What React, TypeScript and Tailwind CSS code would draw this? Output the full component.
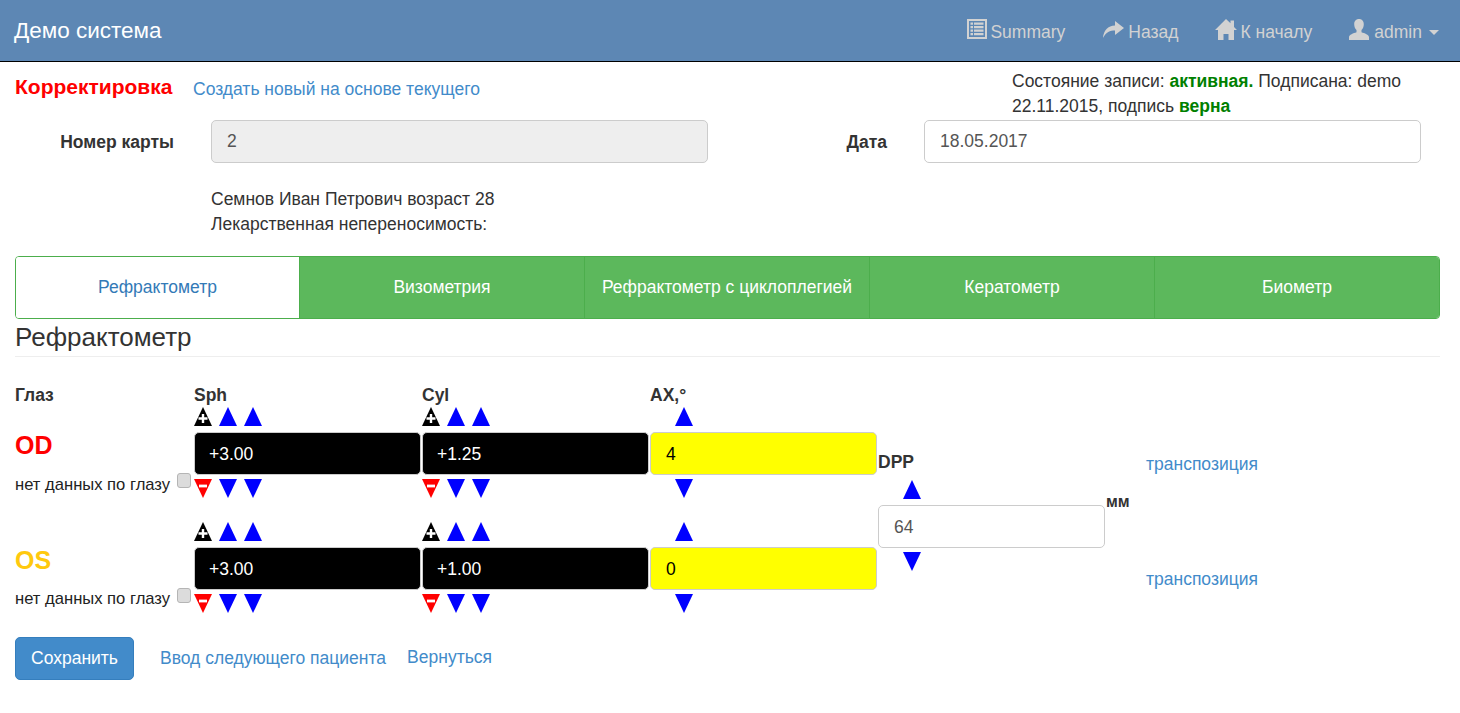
const link = "text-[#428bca]";

function Up({ kind = "blue" }: { kind?: "blue" | "plus" }) {
  return (
    <svg width="18" height="19" viewBox="0 0 18 19" className="block shrink-0">
      <polygon points="9,0 18,19 0,19" fill={kind === "plus" ? "#000" : "#0000ff"} />
      {kind === "plus" && <path d="M9 7v9M4.500 11.500h9" stroke="#fff" strokeWidth="2.400" />}
    </svg>
  );
}

function Down({ kind = "blue" }: { kind?: "blue" | "minus" }) {
  return (
    <svg width="18" height="19" viewBox="0 0 18 19" className="block shrink-0">
      <polygon points="0,0 18,0 9,19" fill={kind === "minus" ? "#ff0000" : "#0000ff"} />
      {kind === "minus" && <path d="M5 7h8" stroke="#fff" strokeWidth="2.800" />}
    </svg>
  );
}

function ListIcon() {
  return (
    <svg width="20" height="20" viewBox="0 0 20 20" fill="#d2d2d2" className="-mt-[3px] shrink-0">
      <path fillRule="evenodd" d="M0 0h20v20H0zM2 2v16h16V2z" />
      <path d="M3.500 3.500h2.500v2.300h-2.500zM7 3.500h9.500v2.300H7zM3.500 7h2.500v2.300h-2.500zM7 7h9.500v2.300H7zM3.500 10.500h2.500v2.300h-2.500zM7 10.500h9.500v2.300H7zM3.500 14h2.500v2.300h-2.500zM7 14h9.500v2.300H7z" />
    </svg>
  );
}

function ShareIcon() {
  return (
    <svg width="21" height="17" viewBox="0 0 21 17" fill="#d2d2d2" className="-mt-[3px] shrink-0">
      <path d="M12 0l9 7-9 7V9.500C7 9.500 3 11 0 17 0.500 9.500 5 4.500 12 4.500z" />
    </svg>
  );
}

function HomeIcon() {
  return (
    <svg width="22" height="21" viewBox="0 0 22 21" fill="#d2d2d2" className="-mt-[3px] shrink-0">
      <path d="M11 0l4.500 4.300V1.500h3.500v6.400L22 11h-3v10h-5.500v-6h-5v6H3V11H0z" />
    </svg>
  );
}

function UserIcon() {
  return (
    <svg width="20" height="21" viewBox="0 0 20 21" fill="#d2d2d2" className="-mt-[3px] shrink-0">
      <path d="M10 0c3 0 4.800 2.200 4.800 5.200 0 2.500-1 4.600-2.300 5.800v2.200c3 1 7.500 2.500 7.500 5V21H0v-2.800c0-2.500 4.500-4 7.500-5V11C6.200 9.800 5.200 7.700 5.200 5.200 5.200 2.200 7 0 10 0z" />
    </svg>
  );
}

function Field({ value, className = "" }: { value: string; className?: string }) {
  return (
    <input
      readOnly
      value={value}
      className={"block h-[43px] w-full rounded-[5px] border border-[#ccc] pr-[15px] text-[17.5px] outline-none " + className}
    />
  );
}

function ValueCol({ value, single }: { value: string; single?: boolean }) {
  return (
    <div className="w-[228px] pr-[1px]">
      {single ? (
        <div className="flex h-[19px] pl-[25px]">
          <Up />
        </div>
      ) : (
        <div className="flex h-[19px] gap-[7px]">
          <Up kind="plus" />
          <Up />
          <Up />
        </div>
      )}
      <Field
        value={value}
        className={"mt-[6px] pt-[2px] " + (single ? "bg-[#ffff00] pl-[15px] text-black" : "bg-black pl-[14px] text-white")}
      />
      {single ? (
        <div className="mt-[4px] flex h-[19px] pl-[25px]">
          <Down />
        </div>
      ) : (
        <div className="mt-[4px] flex h-[19px] gap-[7px]">
          <Down kind="minus" />
          <Down />
          <Down />
        </div>
      )}
    </div>
  );
}

function EyeRow(props: { eye: string; color: string; sph: string; cyl: string; ax: string; noteClass: string }) {
  return (
    <div className="flex h-[115px]">
      <div className="relative w-[179px]">
        <div className={"mt-[20px] text-[25px] font-bold leading-[36px] " + props.color}>{props.eye}</div>
        <div className={"text-[16.6px] leading-[22px] text-[#222] " + props.noteClass}>нет данных по глазу</div>
        <input
          type="checkbox"
          disabled
          className="absolute left-[162px] top-[66px] h-[15px] w-[14px] appearance-none rounded-[3px] border border-[#b5b5b5] bg-[#dcdcdc]"
        />
      </div>
      <ValueCol value={props.sph} />
      <ValueCol value={props.cyl} />
      <ValueCol value={props.ax} single />
    </div>
  );
}

const tabs = [
  { name: "Рефрактометр", width: "w-[284px]" },
  { name: "Визометрия", width: "w-[285px]" },
  { name: "Рефрактометр с циклоплегией", width: "w-[285px]" },
  { name: "Кератометр", width: "w-[285px]" },
  { name: "Биометр", width: "flex-1" },
];

export default function App() {
  return (
    <div className="min-h-[713px] bg-white font-['Liberation_Sans',Arial,sans-serif] text-[17.5px] leading-[25px] text-[#333]">
      <nav className="flex h-[62px] items-center justify-between border-b border-black bg-[#5d87b4] pl-[14px] pr-[21px]">
        <div className="text-[22.5px] text-white">Демо система</div>
        <div className="flex items-center text-[#d2d2d2]">
          <span className="flex items-center gap-[3px]"><ListIcon /><span className="pt-[4px]">Summary</span></span>
          <span className="ml-[38px] flex items-center gap-[4px]"><ShareIcon /><span className="pt-[4px]">Назад</span></span>
          <span className="ml-[37px] flex items-center gap-[3px]"><HomeIcon /><span className="pt-[4px]">К началу</span></span>
          <span className="ml-[37px] flex items-center gap-[5px]">
            <UserIcon /><span className="pt-[4px]">admin</span>
            <span className="ml-[2px] mt-[4px] h-0 w-0 border-x-[5px] border-t-[5px] border-x-transparent border-t-[#d2d2d2]" />
          </span>
        </div>
      </nav>

      <main className="px-[15px] pr-[20px]">
        <div className="flex h-[58px]">
          <div className="mt-[12px] w-[178px] text-[21px] font-bold text-[#ff0000]">Корректировка</div>
          <a className={"mt-[15px] w-[819px] " + link}>Создать новый на основе текущего</a>
          <div className="mt-[7px]">
            Состояние записи: <b className="text-[#008000]">активная.</b> Подписана: demo
            <br />
            22.11.2015, подпись <b className="text-[#008000]">верна</b>
          </div>
        </div>

        <div className="flex items-center">
          <label className="mt-[2px] w-[159px] text-right font-bold">Номер карты</label>
          <div className="ml-[37px] w-[497px]">
            <Field value="2" className="bg-[#eee] pl-[15px] text-[#555]" />
          </div>
          <label className="mt-[2px] w-[179px] text-right font-bold">Дата</label>
          <div className="ml-[37px] w-[497px]">
            <Field value="18.05.2017" className="bg-white pl-[15px] text-[#555]" />
          </div>
        </div>

        <div className="ml-[196px] mt-[24px]">
          Семнов Иван Петрович возраст 28
          <br />
          Лекарственная непереносимость:
        </div>

        <div className="mt-[19px] flex h-[63px] overflow-hidden rounded-[4px] border border-[#4cae4c]">
          {tabs.map((tab, i) => (
            <div
              key={tab.name}
              className={
                "flex items-center justify-center border-r border-[#4cae4c] last:border-r-0 " +
                tab.width +
                (i === 0 ? " bg-white text-[#337ab7]" : " bg-[#5cb85c] text-white")
              }
            >
              {tab.name}
            </div>
          ))}
        </div>

        <h4 className="mt-[2px] border-b border-[#eee] pb-[2px] text-[26px] leading-[33px]">Рефрактометр</h4>

        <div className="mt-[26px] flex h-[24px] font-bold">
          <div className="w-[179px]">Глаз</div>
          <div className="w-[228px]">Sph</div>
          <div className="w-[228px]">Cyl</div>
          <div>AX,°</div>
        </div>

        <div className="flex">
          <div className="w-[863px]">
            <EyeRow eye="OD" color="text-[#ff0000]" sph="+3.00" cyl="+1.25" ax="4" noteClass="mt-[11px]" />
            <EyeRow eye="OS" color="text-[#ffc90e]" sph="+3.00" cyl="+1.00" ax="0" noteClass="mt-[10px]" />
          </div>
          <div className="w-[227px] pt-[43px]">
            <div className="font-bold">DPP</div>
            <div className="mt-[5px] pl-[25px]"><Up /></div>
            <div className="relative mt-[6px]">
              <Field value="64" className="bg-white pl-[15px] pt-[2px] text-[#555]" />
              <span className="absolute left-[228px] top-[-13px] text-[16px] font-bold leading-[20px]">мм</span>
            </div>
            <div className="mt-[4px] pl-[25px]"><Down /></div>
          </div>
          <div className="ml-[41px] pt-[45px]">
            <a className={"block " + link}>транспозиция</a>
            <a className={"mt-[90px] block " + link}>транспозиция</a>
          </div>
        </div>

        <div className="flex items-center">
          <button className="h-[43px] w-[119px] rounded-[5px] border border-[#357ebd] bg-[#428bca] text-white">
            Сохранить
          </button>
          <a className={"ml-[26px] " + link}>Ввод следующего пациента</a>
          <a className={"ml-[21px] -mt-[2px] " + link}>Вернуться</a>
        </div>
      </main>
    </div>
  );
}
